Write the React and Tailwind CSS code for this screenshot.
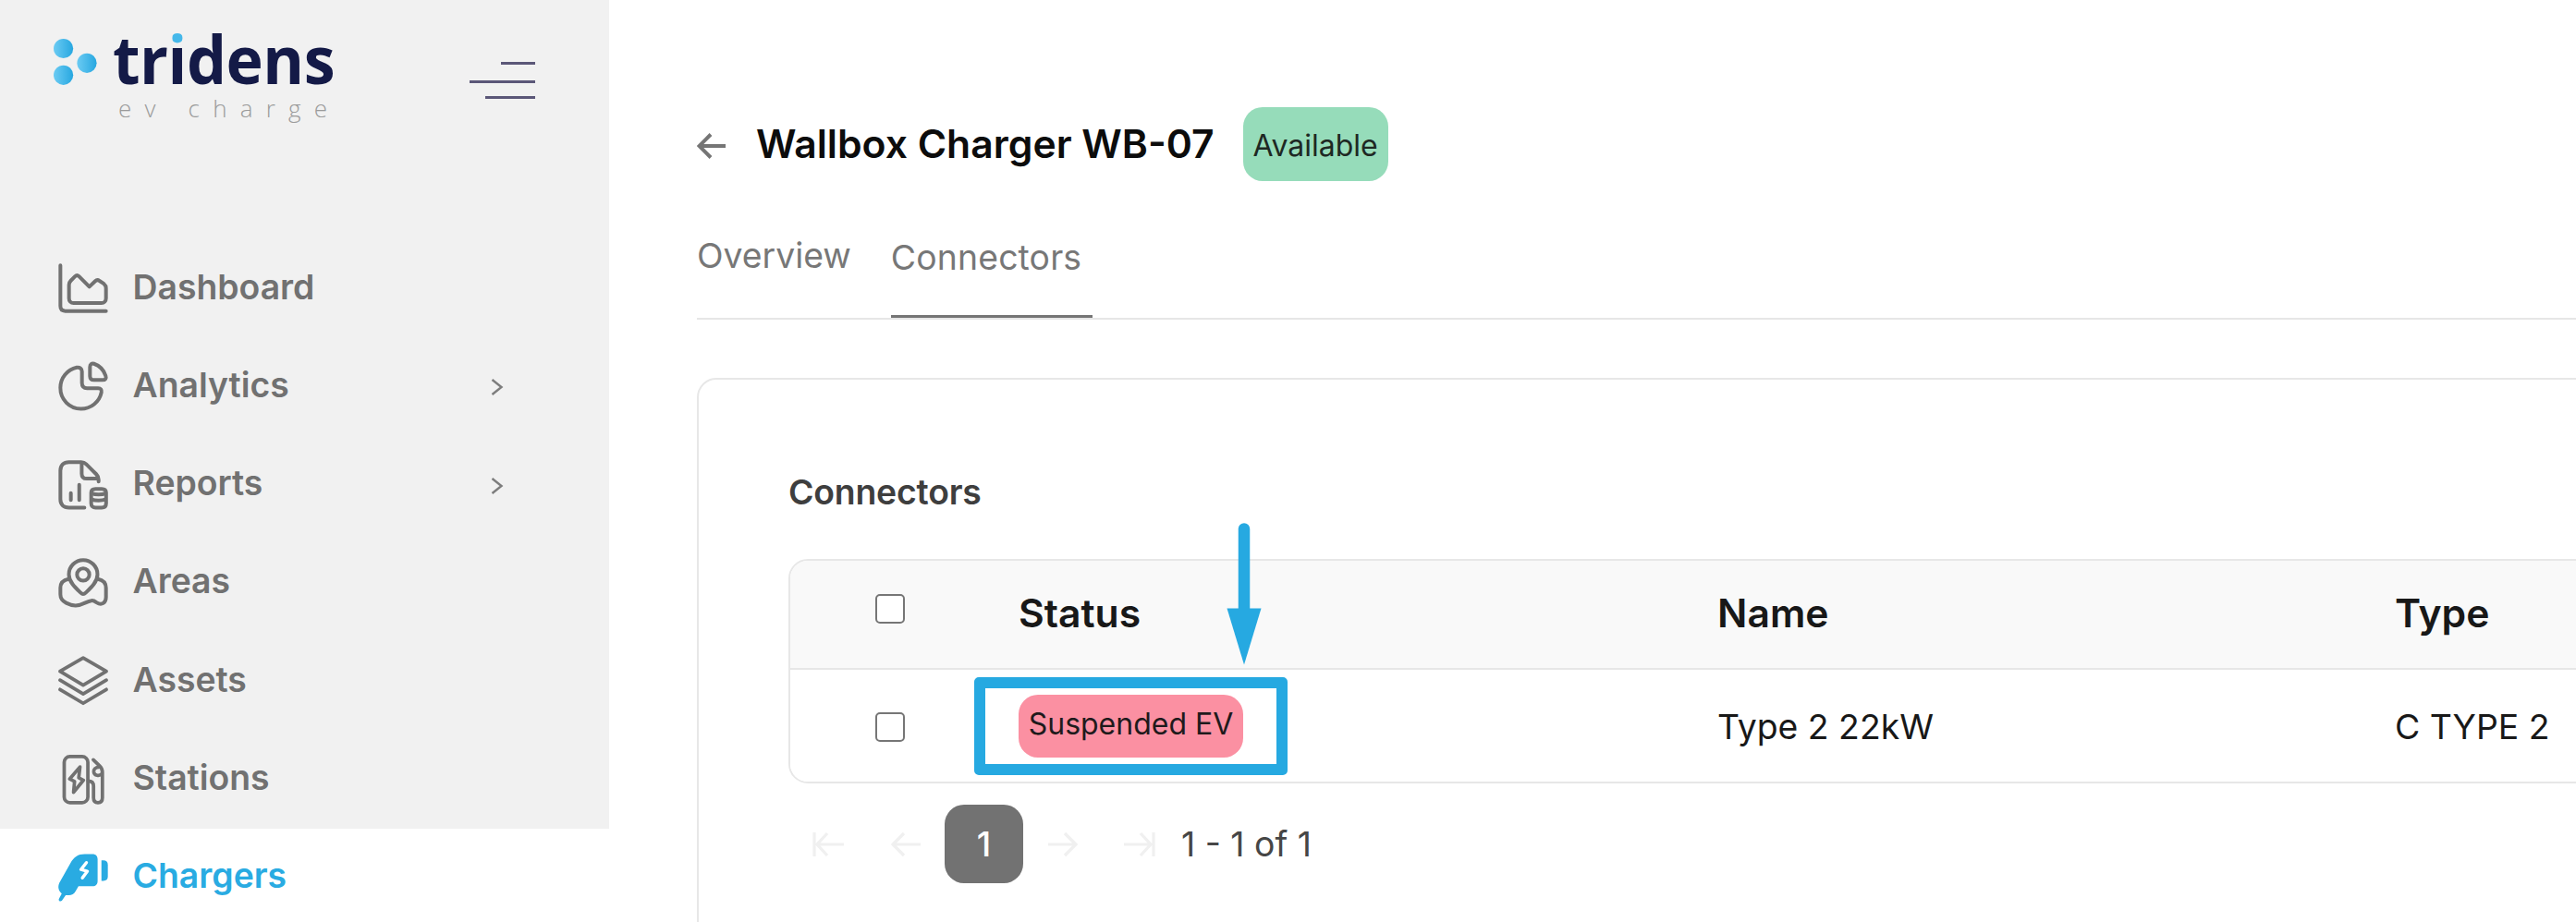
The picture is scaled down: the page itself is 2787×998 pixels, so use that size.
import { useState } from "react";

const stroke = {
  fill: "none",
  stroke: "currentColor",
  strokeWidth: 1.5,
  strokeLinecap: "round",
  strokeLinejoin: "round",
};

function DashboardIcon() {
  return (
    <svg viewBox="0 0 24 24" className="w-16 h-16" {...stroke}>
      <path d="M2.75 2.75V19.25C2.75 20.5 3.5 21.25 4.75 21.25H21.25" />
      <path d="M6.25 10.6C6.25 9.9 6.5 9.4 7 8.9L8.7 7.2C9.2 6.7 9.8 6.7 10.3 7.2L14.5 11.4L16.9 9.1C17.4 8.6 18.1 8.6 18.6 9L20.4 10.2C21 10.7 21.25 11.2 21.25 11.9V16.1C21.25 17.3 20.5 18 19.4 18H8.1C7 18 6.25 17.3 6.25 16.1Z" />
    </svg>
  );
}

function AnalyticsIcon() {
  return (
    <svg viewBox="0 0 24 24" className="w-16 h-16" {...stroke}>
      <path d="M9.4 4.4C5.6 5.2 2.75 8.6 2.75 12.7A8.4 8.4 0 0 0 11.1 21.2C15.2 21.2 18.6 18.4 19.4 14.5C19.6 13.5 19.1 12.8 18.1 12.8H13.6C12.2 12.8 11.5 12 11.5 10.7V6C11.5 4.9 10.6 4.2 9.4 4.4Z" />
      <path d="M14.75 4.2C14.75 3.1 15.5 2.6 16.4 2.9C18.7 3.7 20.3 5.4 21.1 7.7C21.5 8.8 21 9.5 19.9 9.5H16.3C15.3 9.5 14.75 8.9 14.75 8Z" />
    </svg>
  );
}

function ReportsIcon() {
  return (
    <svg viewBox="0 0 24 24" className="w-16 h-16" {...stroke}>
      <path d="M12.5 21.2H6.25C4 21.2 2.75 19.9 2.75 17.7V6.2C2.75 4 4 2.7 6.25 2.7H11.2C12 2.7 12.6 2.9 13.2 3.5L17.3 7.6C17.9 8.2 18.25 9 18.25 9.8V10.6" />
      <path d="M11.4 3V7.4C11.4 8.7 12.1 9.4 13.4 9.4H18" />
      <path d="M7 15.3V18.1M10.4 11.9V18.1" />
      <path d="M15.25 15.1C15.25 14.1 16 13.6 17 13.6H19.5C20.6 13.6 21.3 14.1 21.3 15.1V19.5C21.3 20.6 20.6 21.2 19.5 21.2H17C16 21.2 15.25 20.6 15.25 19.5Z" />
      <path d="M15.5 15.4C17 16 19.6 16 21 15.4M15.5 17.9C17 18.4 19.6 18.4 21 17.9" />
    </svg>
  );
}

function AreasIcon() {
  return (
    <svg viewBox="0 0 24 24" className="w-16 h-16" {...stroke}>
      <path d="M12 16.5C11.6 16.5 11.3 16.3 11 16C8.9 14 6.2 11.6 6.2 8.5A5.8 5.8 0 0 1 17.8 8.5C17.8 11.6 15.1 14 13 16C12.7 16.3 12.4 16.5 12 16.5Z" />
      <circle cx="12" cy="8.6" r="2.5" />
      <path d="M6.1 10.4C4 10.8 2.75 11.9 2.75 14V16.6C2.75 18.4 3.5 19.3 5.1 20.1C8 21.6 10 21.4 12.7 20.1C15 19 15.9 18.8 17.4 19.9C19.6 21.3 21.25 20 21.25 17.8V14C21.25 11.9 20 10.8 17.9 10.4" />
    </svg>
  );
}

function AssetsIcon() {
  return (
    <svg viewBox="0 0 24 24" className="w-16 h-16" {...stroke} strokeWidth={1.4}>
      <path d="M12 2.7L21.4 8.1L12 13.7L2.6 8.1Z" />
      <path d="M2.6 11.7L12 17.3L21.4 11.7" />
      <path d="M2.6 15.5L12 21.1L21.4 15.5" />
    </svg>
  );
}

function StationsIcon() {
  return (
    <svg viewBox="0 0 24 24" className="w-16 h-16" {...stroke} strokeWidth={1.4}>
      <rect x="4.3" y="2.6" width="9.6" height="18.7" rx="2.3" />
      <path d="M10.7 6.8L6.5 11.7L8.5 12.7L8.1 17.1L12.1 12.2L10.2 11.2Z" />
      <path d="M14 12.5C15.6 12.5 16.2 13.2 16.2 14.6V19.3C16.2 20.6 16.9 21.3 18 21.3C19.1 21.3 19.8 20.6 19.8 19.3V9C19.8 7.8 19.5 7.2 18.7 6.4L16.1 3.9" />
      <path d="M18.3 6.9C16.9 7 16.2 7.8 16.3 8.8C16.5 10.4 18.6 10.7 19.5 9.6" />
    </svg>
  );
}

function ChargersIcon() {
  return (
    <svg viewBox="0 0 24 24" className="w-16 h-16" fill="currentColor">
      <path d="M12.6 2.4H15.8C17.1 2.4 17.85 3.2 17.85 4.5V13.4C17.85 14.7 17.1 15.5 15.8 15.5H10.1L8.9 17.5C8.2 18.7 7.2 19.2 5.9 19.1L4.9 19.1L3.4 21.3C2.8 22 1.7 21.3 2.2 20.5L3.3 18.5C2 17.3 1.6 15.9 2.3 14.2L6.9 6C8.2 3.6 9.9 2.4 12.6 2.4Z" />
      <path d="M19.4 5H20.2C21.4 5 22 5.7 22 6.8V11.5C22 12.6 21.4 13.2 20.2 13.3H19.4Z" />
      <path d="M13.3 5.9L11.1 8.7L13.7 9.4L11.7 12.1" fill="none" stroke="#fff" strokeWidth="1.3" strokeLinecap="round" strokeLinejoin="round" />
    </svg>
  );
}

const navItems = [
  { label: "Dashboard", Icon: DashboardIcon },
  { label: "Analytics", Icon: AnalyticsIcon, expandable: true },
  { label: "Reports", Icon: ReportsIcon, expandable: true },
  { label: "Areas", Icon: AreasIcon },
  { label: "Assets", Icon: AssetsIcon },
  { label: "Stations", Icon: StationsIcon },
  { label: "Chargers", Icon: ChargersIcon },
];

const columns = ["Status", "Name", "Type"];

const connectors = [{ status: "Suspended EV", name: "Type 2 22kW", type: "C TYPE 2" }];

function Logo() {
  return (
    <div className="flex items-start">
      <svg viewBox="0 0 48 52" className="w-12 h-[52px] mt-[41px]">
        <defs>
          <linearGradient id="dot" x1="0" x2="1" y1="0" y2="0">
            <stop offset="0" stopColor="#6bcbf3" />
            <stop offset="1" stopColor="#27a7e0" />
          </linearGradient>
        </defs>
        <circle cx="10.6" cy="11.5" r="10.6" fill="url(#dot)" />
        <circle cx="36" cy="27.3" r="10.6" fill="url(#dot)" />
        <circle cx="10.6" cy="40.3" r="10.6" fill="url(#dot)" />
      </svg>
      <div className="flex flex-col ml-[16px] font-['Open_Sans']">
        <span className="h-[102px] pt-7 text-[71px] leading-[72px] font-bold text-[#141a47] tracking-[-0.5px] origin-left scale-x-[0.96]">
          tr
          <span className="text-transparent bg-clip-text bg-[linear-gradient(to_bottom,#45b8ea_37px,#141a47_37px)]">i</span>
          dens
        </span>
        <span className="pl-1.5 text-[26px] leading-[31px] font-light text-[#9b9b9b] tracking-[14.2px]">ev charge</span>
      </div>
    </div>
  );
}

function Sidebar({ active, onSelect }) {
  return (
    <aside className="w-[659px] h-[998px] shrink-0 overflow-hidden bg-[#f1f1f1]">
      <div className="flex justify-between h-[259px] pl-[58px] pr-20">
        <Logo />
        <button className="flex flex-col items-end mt-[67px] h-10">
          <span className="w-[37px] h-[3px] bg-[#5b5778]"></span>
          <span className="w-[71px] h-[3px] mt-[17px] bg-[#5b5778]"></span>
          <span className="w-[54px] h-[3px] mt-[14px] bg-[#5b5778]"></span>
        </button>
      </div>
      <nav>
        {navItems.map(({ label, Icon, expandable }) => (
          <button
            key={label}
            onClick={() => onSelect(label)}
            className={`flex items-center w-full h-[106.33px] pl-[58px] pr-[114px] ${
              active === label ? "bg-white text-[#29abe2]" : "text-[#717171]"
            }`}
          >
            <Icon />
            <span className="ml-[21.5px] mb-1 text-[37.333px] leading-none font-semibold">{label}</span>
            {expandable && (
              <svg viewBox="0 0 14 20" className="w-[14px] h-5 ml-auto mt-[2px]" fill="none" stroke="#7d7d7d" strokeWidth="2.4">
                <path d="M1.5 2L11.5 10L1.5 18" />
              </svg>
            )}
          </button>
        ))}
      </nav>
    </aside>
  );
}

function Checkbox({ className = "" }) {
  return (
    <input
      type="checkbox"
      className={`appearance-none block w-8 h-8 rounded-[5px] border-2 border-[#767676] bg-white ${className}`}
    />
  );
}

function PageArrow({ d }) {
  return (
    <svg viewBox="0 0 34 28" className="w-[34px] h-7" fill="none" stroke="#f0f0f0" strokeWidth="3.2">
      <path d={d} />
    </svg>
  );
}

function Pagination() {
  return (
    <div className="flex items-center h-[85px] mt-[23px] pl-[26px] text-[37.333px] leading-none text-[#464646]">
      <PageArrow d="M2 1V27M16 2L5 14L16 26M5 14H34" />
      <div className="ml-[50px]">
        <PageArrow d="M15 2L3 14L15 26M3 14H33" />
      </div>
      <button className="w-[85px] h-[85px] ml-[25px] rounded-[21px] bg-[#727272] text-white font-medium">1</button>
      <div className="ml-[27px]">
        <PageArrow d="M18 2L30 14L18 26M30 14H0" />
      </div>
      <div className="ml-[48px]">
        <PageArrow d="M32 1V27M18 2L29 14L18 26M29 14H0" />
      </div>
      <span className="ml-7">1 - 1 of 1</span>
    </div>
  );
}

function ConnectorsTable() {
  return (
    <div className="w-[2100px] h-[243px] mt-[46px] rounded-[21px] border-2 border-[#e7e7e7] overflow-hidden text-[#181818]">
      <div className="grid grid-cols-[247px_756px_733px_1fr] h-[118px] bg-[#f9f9f9] border-b-2 border-[#e7e7e7]">
        <Checkbox className="ml-[92px] mt-9" />
        {columns.map((column) => (
          <span key={column} className="mt-9 text-[42.667px] leading-[42px] font-semibold">
            {column}
          </span>
        ))}
      </div>
      {connectors.map((row) => (
        <div key={row.name} className="grid grid-cols-[247px_756px_733px_1fr] h-[121px] bg-white text-[37.333px] leading-[37px]">
          <Checkbox className="ml-[92px] mt-[46px]" />
          <div className="relative pt-[27px]">
            <span className="flex justify-center w-[243px] h-[68px] rounded-[21px] bg-[#fb90a2] text-[32px] leading-[64px] text-[#1f1a1c]">
              {row.status}
            </span>
            {/* Highlight frame around the status */}
            <div className="absolute -left-12 top-2 w-[339px] h-[106px] rounded-[5px] border-[12px] border-[#26a9e1]"></div>
          </div>
          <span className="mt-[43px]">{row.name}</span>
          <span className="mt-[43px]">{row.type}</span>
        </div>
      ))}
    </div>
  );
}

export default function App() {
  const [active, setActive] = useState("Chargers");

  return (
    <div className="flex w-full h-[998px] overflow-hidden bg-white font-['Inter',sans-serif]">
      <Sidebar active={active} onSelect={setActive} />
      <main className="flex-1 min-w-0 h-[998px] pl-[95px] overflow-hidden">
        {/* Title */}
        <div className="flex items-center h-20 mt-[116px]">
          <svg viewBox="0 0 32 28" className="w-8 h-7 mt-1" fill="none" stroke="#757575" strokeWidth="4">
            <path d="M15 1.5L2.5 14L15 26.5M2.5 14H31" />
          </svg>
          <h1 className="ml-8 text-[42.667px] leading-none font-semibold text-[#0c0c0c]">Wallbox Charger WB-07</h1>
          <span className="flex justify-center w-[157px] h-20 ml-[31px] rounded-[21px] bg-[#96dcba] text-[32px] leading-[84px] text-[#1e2823]">
            Available
          </span>
        </div>

        {/* Tabs */}
        <div className="flex h-[150px] border-b-2 border-[#e6e6e6] text-[37.333px] leading-[37px] text-[#777777]">
          <button className="mt-[62px] h-[37px]">Overview</button>
          <button className="w-[218px] h-[148px] ml-[43px] pt-16 flex items-start border-b-[3px] border-[#757575] tracking-[0.15px]">Connectors</button>
        </div>

        {/* Connectors card */}
        <section className="relative w-[2300px] h-[700px] mt-[63px] pl-[97px] pt-[102px] rounded-[21px] border-2 border-[#e7e7e7]">
          <h2 className="h-[46px] text-[37.333px] leading-[39px] font-semibold tracking-[-0.2px] text-[#3e3e3e]">Connectors</h2>
          <ConnectorsTable />
          <Pagination />
          {/* Pointer to the highlighted status */}
          <svg viewBox="0 0 38 154" className="absolute left-[571px] top-[155px] w-[38px] h-[154px]">
            <path d="M19 6.5V98" stroke="#26a9e1" strokeWidth="12.5" strokeLinecap="round" />
            <path d="M0.5 92.5H37.5L19 153.5Z" fill="#26a9e1" />
          </svg>
        </section>
      </main>
    </div>
  );
}
